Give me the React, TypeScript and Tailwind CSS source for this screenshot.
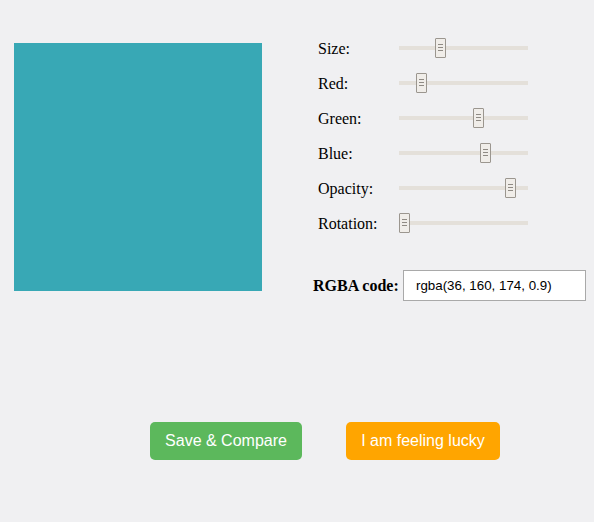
import React from "react";

const rows: { label: string; pos: number }[] = [
  { label: "Size:", pos: 36 },
  { label: "Red:", pos: 17 },
  { label: "Green:", pos: 74 },
  { label: "Blue:", pos: 81 },
  { label: "Opacity:", pos: 106 },
  { label: "Rotation:", pos: 0 },
];

function Slider({ pos }: { pos: number }) {
  return (
    <div className="relative h-[20px] w-[129px] flex items-center">
      <div className="h-[4px] w-full bg-[#e4e0da]" />
      <div
        className="absolute top-0 h-[20px] w-[11px] border border-[#9b968f] bg-[#f0ede9] rounded-[1px] flex flex-col items-center justify-center gap-[2px]"
        style={{ left: pos }}
      >
        <div className="h-px w-[5px] bg-[#8f8a84]" />
        <div className="h-px w-[5px] bg-[#8f8a84]" />
        <div className="h-px w-[5px] bg-[#8f8a84]" />
      </div>
    </div>
  );
}

export default function App() {
  return (
    <div className="min-h-[522px] w-[594px] bg-[#f0f0f2] pt-[30px]" style={{ fontFamily: '"Liberation Serif", "Times New Roman", serif' }}>
      <div className="flex">
        <div className="ml-[14px] mt-[13px] h-[248px] w-[248px] bg-[rgba(36,160,174,0.9)]" />
        <div className="ml-[51px] flex flex-col">
          {rows.map((r) => (
            <div key={r.label} className="flex h-[35px] items-center pl-[5px]">
              <div className="w-[81px] pt-[2px] text-[16px] text-black leading-none">{r.label}</div>
              <Slider pos={r.pos} />
            </div>
          ))}
          <div className="mt-[30px] flex items-center">
            <div className="w-[90px] pt-[1px] text-[16px] font-bold text-black">RGBA code:</div>
            <div
              className="flex h-[31px] w-[183px] items-center border border-[#a9a9a9] bg-white pl-[12px] text-[13.33px] text-black"
              style={{ fontFamily: '"Liberation Sans", Arial, sans-serif' }}
            >
              rgba(36, 160, 174, 0.9)
            </div>
          </div>
        </div>
      </div>
      <div
        className="mt-[121px] flex pl-[150px] gap-[44px]"
        style={{ fontFamily: '"Liberation Sans", Arial, sans-serif' }}
      >
        <button className="h-[38px] w-[152px] rounded-[5px] bg-[#5cb85c] text-[16px] text-white">
          Save &amp; Compare
        </button>
        <button className="h-[38px] w-[154px] rounded-[5px] bg-[#ffa500] text-[16px] text-white">
          I am feeling lucky
        </button>
      </div>
    </div>
  );
}
